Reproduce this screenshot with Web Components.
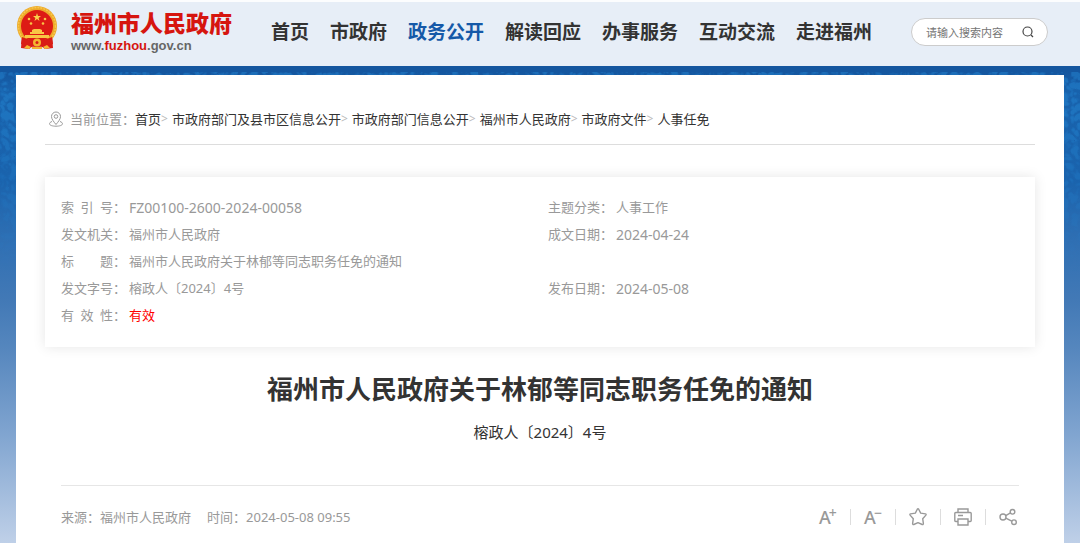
<!DOCTYPE html>
<html lang="zh-CN">
<head>
<meta charset="utf-8">
<meta name="viewport" content="width=device-width, initial-scale=1">
<title>福州市人民政府关于林郁等同志职务任免的通知</title>
<style>
    html, body {
        margin: 0;
        min-height: 100%;
    }

    body {
        font-family: "Noto Sans", "Noto Sans CJK SC", sans-serif;
        font-size: 13px;
        color: #333;
        background: #bfd0e8;
    }
</style>
</head>
<body>
<gov-page>
    <gov-header slot="header">
        <gov-logo slot="logo"></gov-logo>
        <gov-nav-item>首页</gov-nav-item>
        <gov-nav-item>市政府</gov-nav-item>
        <gov-nav-item active>政务公开</gov-nav-item>
        <gov-nav-item>解读回应</gov-nav-item>
        <gov-nav-item>办事服务</gov-nav-item>
        <gov-nav-item>互动交流</gov-nav-item>
        <gov-nav-item>走进福州</gov-nav-item>
        <gov-search slot="search"></gov-search>
    </gov-header>

    <gov-breadcrumb>
        <gov-crumb>首页</gov-crumb>
        <gov-crumb>市政府部门及县市区信息公开</gov-crumb>
        <gov-crumb>市政府部门信息公开</gov-crumb>
        <gov-crumb>福州市人民政府</gov-crumb>
        <gov-crumb>市政府文件</gov-crumb>
        <gov-crumb last>人事任免</gov-crumb>
    </gov-breadcrumb>

    <doc-meta>
        <doc-field label="索 引 号" latin>FZ00100-2600-2024-00058</doc-field>
        <doc-field label="主题分类">人事工作</doc-field>
        <doc-field label="发文机关">福州市人民政府</doc-field>
        <doc-field label="成文日期" latin>2024-04-24</doc-field>
        <doc-field label="标 题" wide>福州市人民政府关于林郁等同志职务任免的通知</doc-field>
        <doc-field label="发文字号">榕政人〔2024〕4号</doc-field>
        <doc-field label="发布日期" latin>2024-05-08</doc-field>
        <doc-field label="有 效 性" valid>有效</doc-field>
    </doc-meta>

    <doc-title>
        福州市人民政府关于林郁等同志职务任免的通知
        <span slot="number">榕政人〔2024〕4号</span>
    </doc-title>

    <doc-toolbar>
        <span slot="source">来源：福州市人民政府</span>
        <span slot="time">时间：2024-05-08 09:55</span>
    </doc-toolbar>
</gov-page>

<script>
// Base class: renders the static template of each component
class GovElement extends HTMLElement {
    constructor() {
        super();
        this.attachShadow({ mode: 'open' });
    }

    connectedCallback() {
        this.shadowRoot.innerHTML = this.render();
    }
}

class GovPage extends GovElement {
    render() {
        return `
            <style>
                :host {
                    display: flex;
                    flex-direction: column;
                    position: relative;
                    min-height: 100vh;
                    background: linear-gradient(#14569f 72px, #1862ac 90px, #1a63ad 180px,
                        #2f6fb3 240px, #4279b6 300px, #5687be 350px, #7ea3cf 430px, #bfd0e8 543px);
                }

                .texture {
                    position: absolute;
                    top: 72px;
                    left: 0;
                    width: 100%;
                    height: 200px;
                    opacity: 0.5;
                    -webkit-mask-image: linear-gradient(#000 40px, transparent);
                    mask-image: linear-gradient(#000 40px, transparent);
                }

                main {
                    position: relative;
                    flex: 1;
                    margin: 9px 16px 0;
                    padding: 0 29px;
                    background: #fff;
                }
            </style>
            <svg class="texture" aria-hidden="true">
                <filter id="relief" x="0" y="0" width="100%" height="100%" color-interpolation-filters="sRGB">
                    <feTurbulence type="turbulence" baseFrequency="0.1" numOctaves="2" seed="4"/>
                    <feColorMatrix values="0 0 0 0 0.14  0 0 0 0 0.52  0 0 0 0 0.82  4 0 0 0 -0.5"/>
                </filter>
                <rect width="100%" height="100%" filter="url(#relief)"/>
            </svg>
            <slot name="header"></slot>
            <main><slot></slot></main>
        `;
    }
}

class GovHeader extends GovElement {
    render() {
        return `
            <style>
                :host {
                    display: block;
                    position: relative;
                    background: #e7eef7;
                    border-top: 2px solid #fcfdfe;
                }

                header {
                    display: flex;
                    align-items: center;
                    justify-content: space-between;
                    height: 60px;
                    padding: 0 32px 4px 16px;
                }

                nav {
                    display: flex;
                    gap: 21px;
                }
            </style>
            <header>
                <slot name="logo"></slot>
                <nav><slot></slot></nav>
                <slot name="search"></slot>
            </header>
        `;
    }
}

class GovLogo extends GovElement {
    render() {
        return `
            <style>
                :host {
                    display: block;
                    align-self: flex-start;
                    padding-top: 4px;
                }

                a {
                    display: flex;
                    gap: 13px;
                    color: #666;
                    text-decoration: none;
                }

                svg {
                    width: 42px;
                    height: 44px;
                }

                .name {
                    display: block;
                    color: #d6150f;
                    font-size: 23px;
                    font-weight: 900;
                    line-height: 34px;
                }

                .host {
                    display: block;
                    font: bold 13px/12px "Liberation Sans", sans-serif;
                }

                b {
                    color: #d6150f;
                }
            </style>
            <a href="#">
                <svg viewBox="0 0 42 44" aria-hidden="true">
                    <path d="M6 30L5 42l8 1 4-3h8l4 3 8-1-1-12z" fill="#d91d16"/>
                    <circle cx="21" cy="20" r="20" fill="#eda92a"/>
                    <circle cx="21" cy="20" r="18.5" fill="none" stroke="#f7c84b" stroke-width="1.5" stroke-dasharray="2 1"/>
                    <circle cx="21" cy="20" r="16" fill="#dd1b15"/>
                    <path d="M21 7l1 3h3l-2.400 1.900.9 3-2.500-1.800-2.500 1.800.9-3L17 10h3z" fill="#f9d04c"/>
                    <g fill="#f9c645">
                        <circle cx="13" cy="13" r="1.300"/><circle cx="29" cy="13" r="1.300"/>
                        <circle cx="15" cy="17.500" r="1.300"/><circle cx="27" cy="17.500" r="1.300"/>
                        <path d="M16 24l2-1h6l2 1v2H16zM14 26h14v2H14zM9 29h24v3H9z"/>
                    </g>
                    <path d="M6 31q6 3 15 3t15-3l1 7q-7 3-16 3T5 38z" fill="#d91d16"/>
                    <circle cx="21" cy="36.500" r="4" fill="#f4b631"/>
                    <circle cx="21" cy="36.500" r="1.500" fill="#d91d16"/>
                    <path d="M8 42l3-3 4 2-2 2zM34 42l-3-3-4 2 2 2zM16 41h10v2H16z" fill="#f4b631"/>
                </svg>
                <span>
                    <span class="name">福州市人民政府</span>
                    <span class="host">www.<b>fuzhou</b>.gov.cn</span>
                </span>
            </a>
        `;
    }
}

class GovNavItem extends GovElement {
    render() {
        return `
            <style>
                :host {
                    display: block;
                }

                a {
                    color: #333;
                    font-size: 19px;
                    font-weight: 700;
                    line-height: 28px;
                    text-decoration: none;
                    white-space: nowrap;
                }

                :host([active]) a,
                a:hover {
                    color: #1559a8;
                }
            </style>
            <a href="#"><slot></slot></a>
        `;
    }
}

class GovSearch extends GovElement {
    render() {
        return `
            <style>
                :host {
                    display: block;
                }

                form {
                    display: flex;
                    align-items: center;
                    box-sizing: border-box;
                    width: 137px;
                    height: 28px;
                    padding: 0 12px 0 14px;
                    background: #fff;
                    border: 1px solid #ccc;
                    border-radius: 14px;
                }

                input {
                    flex: 1;
                    min-width: 0;
                    padding: 0;
                    border: 0;
                    outline: 0;
                    background: none;
                    color: #333;
                    font-family: inherit;
                    font-size: 11px;
                }

                input::placeholder {
                    color: #757575;
                }

                button {
                    display: flex;
                    padding: 0;
                    border: 0;
                    background: none;
                    cursor: pointer;
                }
            </style>
            <form role="search">
                <input type="text" aria-label="搜索" placeholder="请输入搜索内容">
                <button type="button" aria-label="搜索">
                    <svg width="14" height="14" viewBox="0 0 14 14" fill="none" stroke="#444" stroke-width="1.200">
                        <circle cx="6.500" cy="6.500" r="4.500"/>
                        <path d="M10 10l2 2"/>
                    </svg>
                </button>
            </form>
        `;
    }
}

class GovBreadcrumb extends GovElement {
    render() {
        return `
            <style>
                :host {
                    display: block;
                    padding: 31px 4px 12px;
                    border-bottom: 1px solid #ddd;
                }

                nav {
                    display: flex;
                    flex-wrap: wrap;
                    align-items: center;
                    line-height: 26px;
                    color: #999;
                }

                svg {
                    margin-right: 7px;
                }
            </style>
            <nav aria-label="当前位置">
                <svg width="14" height="16" viewBox="0 0 14 16" fill="none" stroke="#999">
                    <path d="M7 13.500C4.500 10.500 2.500 8 2.500 5.500a4.500 4.500 0 0 1 9 0C11.500 8 9.500 10.500 7 13.500z"/>
                    <circle cx="7" cy="5.500" r="1.800"/>
                    <path d="M3 10.500C1.500 11 .5 11.800.5 12.800c0 1.500 3 2.400 6.500 2.400s6.500-.9 6.500-2.400c0-1-1-1.800-2.500-2.300"/>
                </svg>
                <span>当前位置：</span>
                <slot></slot>
            </nav>
        `;
    }
}

class GovCrumb extends GovElement {
    render() {
        const separator = this.hasAttribute('last') ? '' : '<span>&gt;</span>';

        return `
            <style>
                :host {
                    display: flex;
                    align-items: center;
                    white-space: nowrap;
                }

                a {
                    color: #333;
                    text-decoration: none;
                }

                span {
                    margin-right: 4px;
                    color: #bbb;
                    font-size: 12px;
                }
            </style>
            <a href="#"><slot></slot></a>${separator}
        `;
    }
}

class DocMeta extends GovElement {
    render() {
        return `
            <style>
                :host {
                    display: grid;
                    grid-template-columns: 1fr 1fr;
                    column-gap: 16px;
                    margin-top: 32px;
                    padding: 17px 16px 18px;
                    background: #fff;
                    box-shadow: 0 0 12px rgba(0, 0, 0, 0.1);
                }
            </style>
            <slot></slot>
        `;
    }
}

class DocField extends GovElement {
    render() {
        const label = this.getAttribute('label') || '';

        return `
            <style>
                :host {
                    display: flex;
                    height: 27px;
                    line-height: 27px;
                    color: #999;
                }

                :host([wide]) {
                    grid-column: 1 / -1;
                }

                :host([latin]) .value {
                    font-size: 14px;
                }

                :host([valid]) .value {
                    color: #f00;
                }

                .label {
                    width: 52px;
                    text-align-last: justify;
                }

                .colon {
                    width: 16px;
                }
            </style>
            <span class="label">${label}</span>
            <span class="colon">：</span>
            <span class="value"><slot></slot></span>
        `;
    }
}

class DocTitle extends GovElement {
    render() {
        return `
            <style>
                :host {
                    display: block;
                    margin-top: 22px;
                    text-align: center;
                }

                h1 {
                    margin: 0;
                    font-size: 26px;
                    line-height: 40px;
                }

                p {
                    margin: 11px 0 0;
                    font-size: 15px;
                    line-height: 24px;
                }
            </style>
            <h1><slot></slot></h1>
            <p><slot name="number"></slot></p>
        `;
    }
}

class DocToolbar extends GovElement {
    render() {
        return `
            <style>
                :host {
                    display: flex;
                    align-items: center;
                    justify-content: space-between;
                    margin: 41px 16px 0;
                    padding: 18px 2px 12px 0;
                    border-top: 1px solid #e6e6e6;
                    color: #999;
                    line-height: 26px;
                }

                .info {
                    display: flex;
                    gap: 16px;
                }

                .tools {
                    display: flex;
                    align-items: center;
                    gap: 13px;
                }

                i {
                    width: 1px;
                    height: 16px;
                    background: #ddd;
                }

                button {
                    display: flex;
                    width: 18px;
                    height: 18px;
                    padding: 0;
                    border: 0;
                    background: none;
                    color: #999;
                    font: 500 18px/18px "Noto Sans", sans-serif;
                    cursor: pointer;
                }

                sup {
                    margin-left: -2px;
                    font-size: 14px;
                    line-height: 10px;
                }

                svg {
                    fill: none;
                    stroke: #999;
                    stroke-width: 1.400;
                }
            </style>
            <div class="info">
                <slot name="source"></slot>
                <slot name="time"></slot>
            </div>
            <div class="tools">
                <button type="button" aria-label="放大字体">A<sup>+</sup></button>
                <i></i>
                <button type="button" aria-label="缩小字体">A<sup>−</sup></button>
                <i></i>
                <button type="button" aria-label="收藏">
                    <svg width="18" height="18" viewBox="0 0 18 18">
                        <path stroke-linejoin="round" d="M8.300 1.200q.7-.9 1.400 0l2 3.900 4.700.8q1.100.3.500 1.200l-3.200 3.600.7 4.900q0 1.300-1.200.9L9 14.700l-4.200 1.800q-1.200.4-1.200-.9l.7-4.900L1.100 7.100q-.6-.9.5-1.200l4.700-.8z"/>
                    </svg>
                </button>
                <i></i>
                <button type="button" aria-label="打印">
                    <svg width="18" height="18" viewBox="0 0 18 18">
                        <path d="M4 4.500V1h10v3.500M4 13.500H1.800q-1 0-1-1v-7q0-1 1-1h14.400q1 0 1 1v7q0 1-1 1H14M4 11h10v6H4zM4 7.500h5"/>
                    </svg>
                </button>
                <i></i>
                <button type="button" aria-label="分享">
                    <svg width="18" height="18" viewBox="0 0 18 18">
                        <circle cx="4" cy="9" r="3"/>
                        <circle cx="13.500" cy="3.800" r="2.300"/>
                        <circle cx="15" cy="14.200" r="2.300"/>
                        <path d="M6.700 7.600l4.800-2.700M6.800 10.200l6 3"/>
                    </svg>
                </button>
            </div>
        `;
    }
}

customElements.define('gov-page', GovPage);
customElements.define('gov-header', GovHeader);
customElements.define('gov-logo', GovLogo);
customElements.define('gov-nav-item', GovNavItem);
customElements.define('gov-search', GovSearch);
customElements.define('gov-breadcrumb', GovBreadcrumb);
customElements.define('gov-crumb', GovCrumb);
customElements.define('doc-meta', DocMeta);
customElements.define('doc-field', DocField);
customElements.define('doc-title', DocTitle);
customElements.define('doc-toolbar', DocToolbar);
</script>
</body>
</html>
